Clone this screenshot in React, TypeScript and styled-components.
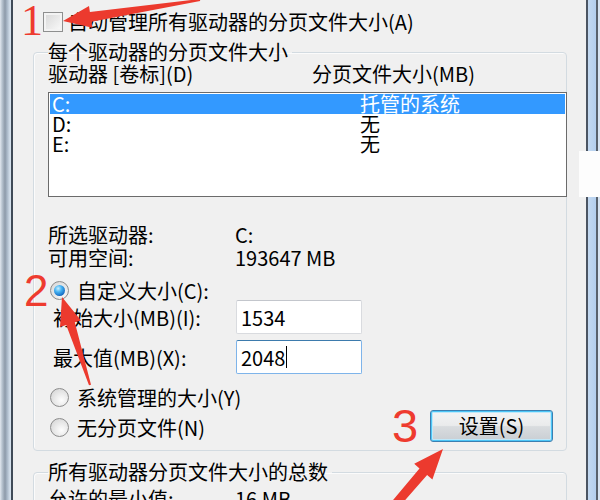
import styled, { createGlobalStyle } from 'styled-components';

const GlobalStyle = createGlobalStyle`
  html, body {
    margin: 0;
    padding: 0;
    background: #f0f0f0;
  }
  body {
    width: 600px;
    height: 500px;
    overflow: hidden;
  }
`;

const uiFont = `"Noto Sans CJK SC", "Noto Sans", sans-serif`;

const Screen = styled.div`
  position: relative;
  width: 600px;
  height: 500px;
  overflow: hidden;
  display: flex;
  font-family: ${uiFont};
  font-size: 20px;
  color: #000;
  background: #f0f0f0;
`;

const LeftFrame = styled.div`
  flex: none;
  width: 11px;
  background: linear-gradient(to right, #e2e8ef 0, #b9c5d1 2px, #8d9aa9 5px, #a7b6c6 7px, #d4e0ec 10px);
  border-right: 2px solid #3f4a57;
`;

const RightFrame = styled.div`
  flex: none;
  width: 14px;
  background: linear-gradient(
    to right,
    #4b5563 0, #4b5563 2px,
    #c3d9f1 2px, #b4cfee 10px,
    #59626d 10px, #59626d 12px,
    #d7e4f2 12px
  );
`;

const Body = styled.div`
  flex: none;
  width: 573px;
  box-sizing: border-box;
  padding: 11px 19px 0 20px;
  display: flex;
  flex-direction: column;
`;

const CheckRow = styled.label`
  display: flex;
  align-items: center;
  gap: 5px;
  height: 21px;
  margin-left: 10px;
  line-height: 21px;
  white-space: nowrap;
`;

const CheckBox = styled.span`
  flex: none;
  width: 20px;
  height: 20px;
  box-sizing: border-box;
  border: 1px solid #8e8f8f;
  background: linear-gradient(135deg, #d6d6d6, #fbfbfb);
  box-shadow: inset 0 0 0 2px #f3f3f3;
`;

const Group = styled.fieldset<{ $top: number }>`
  margin: ${p => p.$top}px 0 0 0;
  padding: 0 0 8px 14px;
  min-width: 0;
  border: 1px solid #d3dbe1;
  border-radius: 4px;
  box-shadow: inset 1px 1px 0 #fbfbfb;
`;

const Legend = styled.legend`
  padding: 0 4px 0 0;
  line-height: 22px;
  white-space: nowrap;
`;

const ColumnHeader = styled.div`
  display: grid;
  grid-template-columns: 264px auto;
  line-height: 22px;
  white-space: nowrap;
`;

const ListBox = styled.div`
  margin: 7px -1px 0 0;
  height: 105px;
  box-sizing: border-box;
  border: 1px solid #6b6b6b;
  padding: 1px;
  background: #fff;
`;

const DriveRow = styled.div<{ $selected?: boolean }>`
  display: grid;
  grid-template-columns: 308px auto;
  height: 20px;
  line-height: 20px;
  padding-left: 2px;
  white-space: nowrap;
  background: ${p => (p.$selected ? '#3399ff' : 'transparent')};
  color: ${p => (p.$selected ? '#fff' : '#000')};
`;

const InfoGrid = styled.div<{ $top: number }>`
  display: grid;
  grid-template-columns: 187px auto;
  margin-top: ${p => p.$top}px;
  line-height: 23px;
  white-space: nowrap;
`;

const RadioRow = styled.label<{ $height: number }>`
  display: flex;
  align-items: center;
  gap: 8px;
  height: ${p => p.$height}px;
  padding-left: 2px;
  white-space: nowrap;
`;

const Radio = styled.span<{ $checked?: boolean }>`
  flex: none;
  width: 19px;
  height: 19px;
  box-sizing: border-box;
  border-radius: 50%;
  border: 1px solid #8c8c8c;
  background: radial-gradient(circle at 62% 65%, #fdfdfd 0, #e9e9e9 45%, #cfcfcf 100%);
  display: flex;
  align-items: center;
  justify-content: center;

  &::after {
    content: '';
    display: ${p => (p.$checked ? 'block' : 'none')};
    width: 11px;
    height: 11px;
    border-radius: 50%;
    background: radial-gradient(circle at 38% 32%, #c8f0ff 0, #45b2f2 35%, #1569c1 75%, #0c4a8e 100%);
  }
`;

const SizeGrid = styled.div`
  display: grid;
  grid-template-columns: 188px 126px;
  grid-auto-rows: 34px;
  row-gap: 6px;
  align-items: center;
`;

const SizeLabel = styled.span`
  padding-left: 5px;
  white-space: nowrap;
`;

const Field = styled.div<{ $focused?: boolean }>`
  display: flex;
  align-items: center;
  height: 34px;
  box-sizing: border-box;
  padding: 0 4px;
  background: #fff;
  border: 1px solid ${p => (p.$focused ? '#7eb4ea' : '#d9dbdf')};
  border-top-color: ${p => (p.$focused ? '#3d7bad' : '#c3c6cc')};
  border-radius: 2px;
`;

const Caret = styled.span`
  width: 1px;
  height: 22px;
  margin-left: 1px;
  background: #000;
`;

const Footer = styled.div`
  display: flex;
  justify-content: space-between;
  align-items: flex-start;
  margin-top: 12px;
`;

const RadioColumn = styled.div`
  display: flex;
  flex-direction: column;
  gap: 8px;
`;

const PushButton = styled.button`
  width: 123px;
  height: 32px;
  margin: 24px 13px 0 0;
  padding: 0;
  box-sizing: border-box;
  border: 1px solid #3c7fb1;
  border-radius: 3px;
  box-shadow: inset 0 0 0 1px #4cc6f7, inset 0 0 0 2px #bfe8fa;
  background: linear-gradient(#f3f4f5 0%, #eaebec 48%, #d9dcdf 52%, #c9ced3 100%);
  font-family: ${uiFont};
  font-size: 20px;
  line-height: 30px;
  color: #000;
`;

const Overlay = styled.div`
  position: absolute;
  inset: 0;
  pointer-events: none;
`;

const Mark = styled.span<{ $serif?: boolean; $size: number; $x: number; $y: number }>`
  position: absolute;
  left: ${p => p.$x}px;
  top: ${p => p.$y}px;
  font-family: ${p => (p.$serif ? '"Liberation Serif", serif' : '"Liberation Sans", sans-serif')};
  font-size: ${p => p.$size}px;
  line-height: ${p => p.$size}px;
  color: #ee3b2f;
`;

const Patch = styled.div`
  position: absolute;
  left: 579px;
  top: 151px;
  width: 21px;
  height: 46px;
  background: #fdfdfd;
`;

const Arrows = styled.svg`
  position: absolute;
  left: 0;
  top: 0;
`;

const drives = [
  { name: 'C:', size: '托管的系统', selected: true },
  { name: 'D:', size: '无' },
  { name: 'E:', size: '无' },
];

const App = () => {
  return (
    <Screen>
      <GlobalStyle />
      <LeftFrame />
      <Body>
        <CheckRow>
          <CheckBox />
          自动管理所有驱动器的分页文件大小(A)
        </CheckRow>

        <Group $top={9}>
          <Legend>每个驱动器的分页文件大小</Legend>
          <ColumnHeader>
            <span>驱动器 [卷标](D)</span>
            <span>分页文件大小(MB)</span>
          </ColumnHeader>
          <ListBox>
            {drives.map(d => (
              <DriveRow key={d.name} $selected={d.selected}>
                <span>{d.name}</span>
                <span>{d.size}</span>
              </DriveRow>
            ))}
          </ListBox>

          <InfoGrid $top={26}>
            <span>所选驱动器:</span>
            <span>C:</span>
            <span>可用空间:</span>
            <span>193647 MB</span>
          </InfoGrid>

          <RadioRow $height={20} style={{ marginTop: 11 }}>
            <Radio $checked />
            自定义大小(C):
          </RadioRow>
          <SizeGrid>
            <SizeLabel>初始大小(MB)(I):</SizeLabel>
            <Field>1534</Field>
            <SizeLabel>最大值(MB)(X):</SizeLabel>
            <Field $focused>
              2048
              <Caret />
            </Field>
          </SizeGrid>

          <Footer>
            <RadioColumn>
              <RadioRow $height={22}>
                <Radio />
                系统管理的大小(Y)
              </RadioRow>
              <RadioRow $height={22}>
                <Radio />
                无分页文件(N)
              </RadioRow>
            </RadioColumn>
            <PushButton type="button">设置(S)</PushButton>
          </Footer>
        </Group>

        <Group $top={10}>
          <Legend>所有驱动器分页文件大小的总数</Legend>
          <InfoGrid $top={4}>
            <span>允许的最小值:</span>
            <span>16 MB</span>
          </InfoGrid>
        </Group>
      </Body>
      <RightFrame />

      <Overlay>
        <Patch />
        <Arrows width={600} height={500} viewBox="0 0 600 500">
          <polygon
            fill="#ec3a2e"
            points="63,21 92.4,27.7 91.5,21.7 200.2,1 199.8,-1 89.9,11.9 89,5.9"
          />
          <polygon
            fill="#ec3a2e"
            points="62,297 81,320.4 74.8,322.3 91,384.7 89,385.3 66.2,325.1 60,327"
          />
          <polygon
            fill="#ec3a2e"
            points="443,449 432.4,479.6 427.1,475 393,514 386.4,508 419.5,468.4 414.2,463.8"
          />
        </Arrows>
        <Mark $serif $size={44} $x={21} $y={-1}>1</Mark>
        <Mark $size={44} $x={24} $y={269}>2</Mark>
        <Mark $size={47} $x={392} $y={402}>3</Mark>
      </Overlay>
    </Screen>
  );
};

export default App;
